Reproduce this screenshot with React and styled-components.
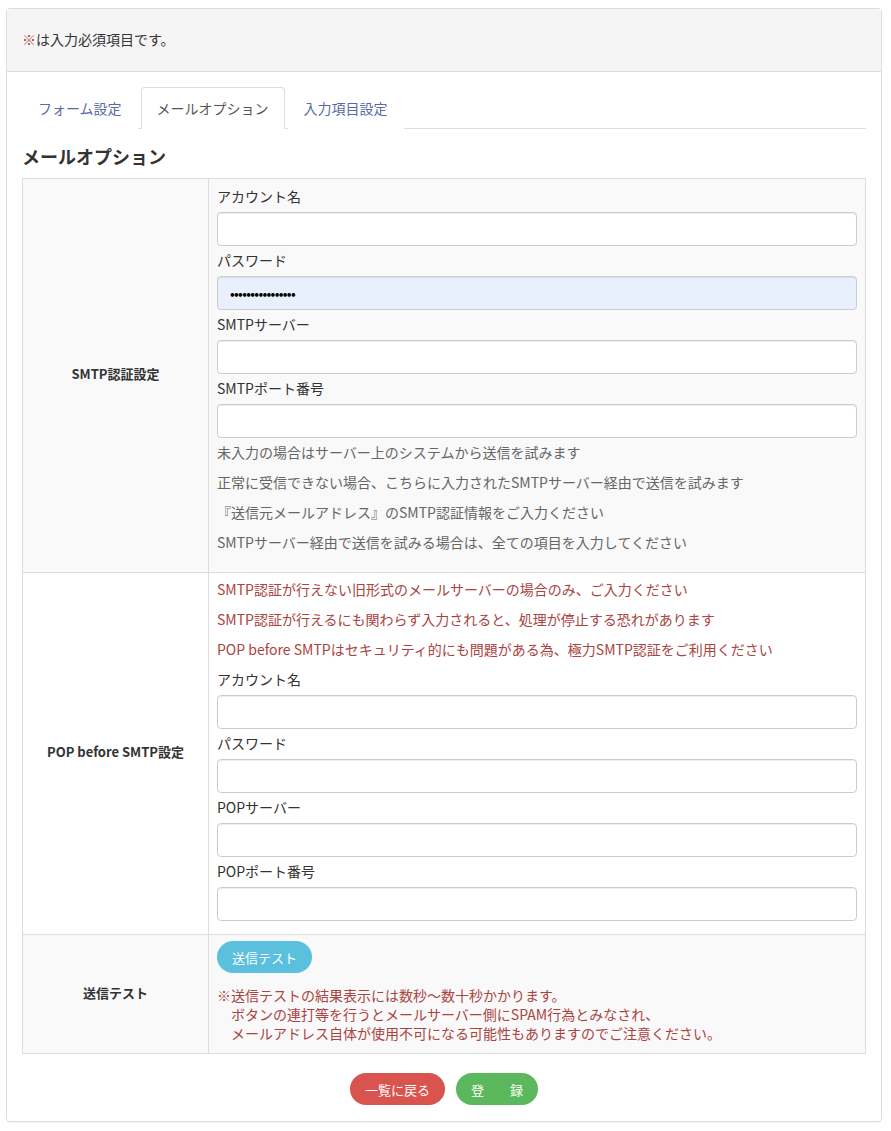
import React from "react";
import styled, { createGlobalStyle } from "styled-components";

const Global = createGlobalStyle`
  html, body { margin: 0; padding: 0; background: #fff; }
  body {
    font-family: "Noto Sans CJK JP", "Noto Sans", sans-serif;
    font-size: 14px;
    line-height: 20px;
    color: #333;
  }
  * { box-sizing: border-box; }
`;

const Page = styled.div`
  padding: 8px 9px 9px 6px;
`;

const Panel = styled.div`
  border: 1px solid #ddd;
  border-radius: 4px;
  box-shadow: 0 1px 1px rgba(0,0,0,0.05);
  background: #fff;
`;

const PanelHeading = styled.div`
  background: #f5f5f5;
  border-bottom: 1px solid #ddd;
  padding: 20px 15px 22px;
  font-size: 14px;
`;

const Req = styled.span`
  color: #a94442;
`;

const PanelBody = styled.div`
  padding: 15px 15px 16px;
`;

const Tabs = styled.ul`
  display: flex;
  list-style: none;
  margin: 0;
  padding: 0;
  border-bottom: 1px solid #ddd;
`;

const Tab = styled.li`
  margin-right: 3px;
  margin-bottom: -1px;
  padding: 10px 15px;
  line-height: 20px;
  border: 1px solid ${(p) => (p.$active ? "#ddd" : "transparent")};
  border-bottom-color: ${(p) => (p.$active ? "#fff" : "transparent")};
  border-radius: 4px 4px 0 0;
  background: #fff;
  color: ${(p) => (p.$active ? "#555" : "#5a69a8")};
  cursor: pointer;
`;

const Heading = styled.h3`
  margin: 16px 0 11px;
  font-size: 18px;
  line-height: 22px;
  font-weight: bold;
  color: #333;
`;

const Table = styled.div`
  display: grid;
  grid-template-columns: 186px 1fr;
  border: 1px solid #ddd;
`;

const LabelCell = styled.div`
  display: flex;
  align-items: center;
  justify-content: center;
  padding: 8px 8px 11px;
  font-size: 13px;
  font-weight: bold;
  color: #333;
  background: ${(p) => (p.$odd ? "#f9f9f9" : "#fff")};
  border-top: ${(p) => (p.$first ? "none" : "1px solid #ddd")};
  border-right: 1px solid #ddd;
`;

const ContentCell = styled.div`
  padding: ${(p) => p.$pt ?? 8}px 8px ${(p) => p.$pb ?? 8}px;
  background: ${(p) => (p.$odd ? "#f9f9f9" : "#fff")};
  border-top: ${(p) => (p.$first ? "none" : "1px solid #ddd")};
`;

const FieldLabel = styled.div`
  line-height: 20px;
  margin-bottom: 6px;
  color: #333;
`;

const Input = styled.input`
  display: block;
  width: 100%;
  height: 34px;
  margin-bottom: 4px;
  padding: 6px 12px;
  border: 1px solid #ccc;
  border-radius: 4px;
  background: ${(p) => (p.$filled ? "#e8f0fe" : "#fff")};
  box-shadow: inset 0 1px 1px rgba(0,0,0,0.075);
  font-family: inherit;
  font-size: 14px;
  color: #000;
  letter-spacing: ${(p) => (p.$filled ? "-0.7px" : "0")};
`;

const Note = styled.p`
  margin: 3px 0 10px;
  & + & { margin-top: 0; }
  line-height: 20px;
  color: ${(p) => (p.$danger ? "#a94442" : "#666")};
  &:last-child { margin-bottom: 12px; }
`;

const Pill = styled.button`
  border: none;
  border-radius: 16px;
  height: 32px;
  padding: 0 15px;
  font-family: inherit;
  font-size: 13px;
  color: #fff;
  cursor: pointer;
  background: ${(p) => p.$bg};
  min-width: ${(p) => p.$min || 0}px;
`;

const TestNote = styled.div`
  margin-top: 13px;
  color: #a94442;
  line-height: 19px;
  white-space: pre;
`;

const Actions = styled.div`
  display: flex;
  justify-content: center;
  gap: 11px;
  margin-top: 19px;
`;

function Field({ label, filled }) {
  return (
    <>
      <FieldLabel>{label}</FieldLabel>
      {filled ? (
        <Input type="password" $filled defaultValue="abcdefghijklmnop" />
      ) : (
        <Input type="text" />
      )}
    </>
  );
}

export default function App() {
  return (
    <>
      <Global />
      <Page>
        <Panel>
          <PanelHeading>
            <Req>※</Req>は入力必須項目です。
          </PanelHeading>
          <PanelBody>
            <Tabs>
              <Tab>フォーム設定</Tab>
              <Tab $active>メールオプション</Tab>
              <Tab>入力項目設定</Tab>
            </Tabs>
            <Heading>メールオプション</Heading>
            <Table>
              <LabelCell $odd $first>SMTP認証設定</LabelCell>
              <ContentCell $odd $first $pt={7}>
                <Field label="アカウント名" />
                <Field label="パスワード" filled />
                <Field label="SMTPサーバー" />
                <Field label="SMTPポート番号" />
                <Note>未入力の場合はサーバー上のシステムから送信を試みます</Note>
                <Note>正常に受信できない場合、こちらに入力されたSMTPサーバー経由で送信を試みます</Note>
                <Note>『送信元メールアドレス』のSMTP認証情報をご入力ください</Note>
                <Note>SMTPサーバー経由で送信を試みる場合は、全ての項目を入力してください</Note>
              </ContentCell>

              <LabelCell>POP before SMTP設定</LabelCell>
              <ContentCell $pt={6} $pb={9}>
                <Note $danger style={{ marginTop: 0 }}>SMTP認証が行えない旧形式のメールサーバーの場合のみ、ご入力ください</Note>
                <Note $danger>SMTP認証が行えるにも関わらず入力されると、処理が停止する恐れがあります</Note>
                <Note $danger>POP before SMTPはセキュリティ的にも問題がある為、極力SMTP認証をご利用ください</Note>
                <Field label="アカウント名" />
                <Field label="パスワード" />
                <Field label="POPサーバー" />
                <Field label="POPポート番号" />
              </ContentCell>

              <LabelCell $odd>送信テスト</LabelCell>
              <ContentCell $odd $pt={6} $pb={10}>
                <Pill $bg="#5bc0de">送信テスト</Pill>
                <TestNote>{"※送信テストの結果表示には数秒～数十秒かかります。\n　ボタンの連打等を行うとメールサーバー側にSPAM行為とみなされ、\n　メールアドレス自体が使用不可になる可能性もありますのでご注意ください。"}</TestNote>
              </ContentCell>
            </Table>
            <Actions>
              <Pill $bg="#d9534f" $min={95}>一覧に戻る</Pill>
              <Pill $bg="#5cb85c" $min={82}>登　　録</Pill>
            </Actions>
          </PanelBody>
        </Panel>
      </Page>
    </>
  );
}
